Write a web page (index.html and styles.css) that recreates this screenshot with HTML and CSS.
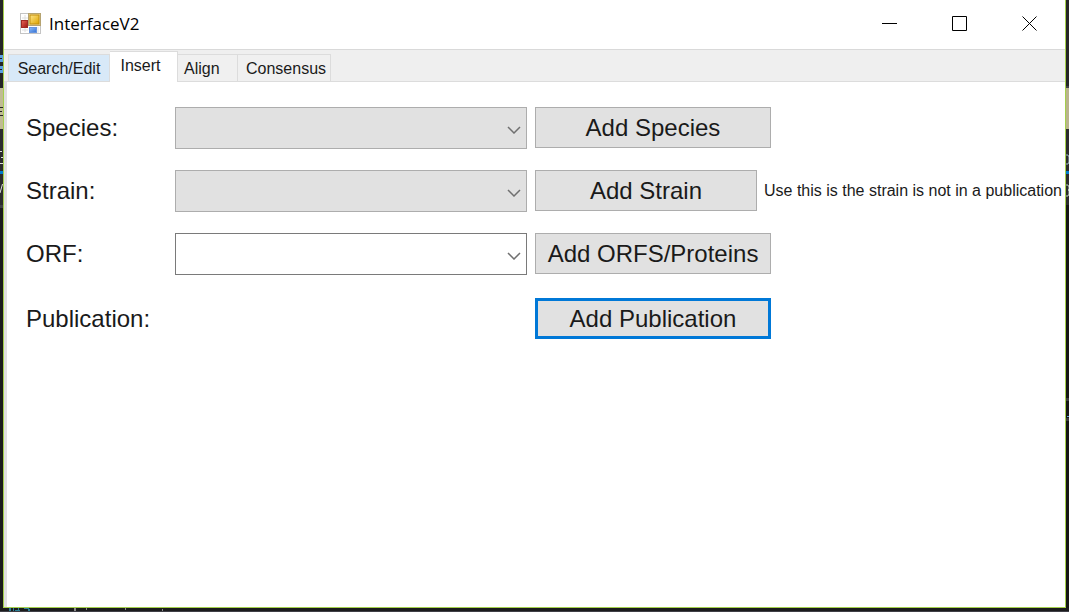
FILE: index.html
```html
<!DOCTYPE html>
<html lang="en">
<head>
<meta charset="utf-8">
<title>InterfaceV2</title>
<link rel="stylesheet" href="styles.css">
</head>
<body>
<div class="desktop">
  <svg class="edge" viewBox="0 0 3 608" preserveAspectRatio="xMinYMin slice" aria-hidden="true">
    <rect width="3" height="608" fill="#1b1b1c"/>
    <rect width="3" height="88" fill="#252526"/>
    <path d="M0 55h3v7H0zM0 66h3v7H0z" fill="#5a9fe0"/>
    <path d="M0 58h2v1H0zM0 69h2v1H0z" fill="#1e1e1e"/>
    <rect y="88" width="3" height="41" fill="#c0bb93"/>
    <path d="M0 107h3v1H0zM0 111h2v1H0zM0 115h3v1H0z" fill="#222"/>
    <rect y="129" width="3" height="76" fill="#2b2b2d"/>
    <path d="M0 151h2v1H0zM1 157h2v1H1zM0 163h3v1H0z" fill="#ddd"/>
    <rect y="171" width="3" height="3" fill="#007acc"/>
    <path d="M2.500 184L0 193" stroke="#ddd" fill="none"/>
    <rect y="205" width="3" height="3" fill="#3f3f46"/>
  </svg>

  <main class="window">
    <header class="titlebar">
      <svg class="app-icon" viewBox="0 0 22 22" aria-hidden="true">
        <defs>
          <linearGradient id="gold" x2="1" y2="1"><stop stop-color="#ffe68a"/><stop offset="1" stop-color="#dda400"/></linearGradient>
          <linearGradient id="red" x2="1" y2="1"><stop stop-color="#e8665b"/><stop offset="1" stop-color="#9c150e"/></linearGradient>
          <linearGradient id="blue" x2="1" y2="1"><stop stop-color="#8cbcff"/><stop offset="1" stop-color="#3470d0"/></linearGradient>
        </defs>
        <rect x="0.500" y="0.500" width="20" height="20" fill="#fff" stroke="#c4c4c4"/>
        <path d="M2 5h6M2 17h6M13 14v6M5 2v17M18 14v6" stroke="#dedede"/>
        <rect x="8.500" y="0.500" width="12" height="12" fill="#ead69b" stroke="#b5a370"/>
        <rect x="10" y="2" width="9" height="9" fill="url(#gold)" stroke="#c18e0c"/>
        <rect x="1.500" y="7.500" width="6" height="7" fill="url(#red)" stroke="#9e2b25"/>
        <rect x="9.500" y="14.500" width="7" height="5" fill="url(#blue)" stroke="#6795df"/>
      </svg>
      <h1 class="title">InterfaceV2</h1>
      <button class="caption" type="button" aria-label="Minimize"><svg viewBox="0 0 16 16"><path d="M0 7.500h15"/></svg></button>
      <button class="caption" type="button" aria-label="Maximize"><svg viewBox="0 0 16 16"><path d="M.5.5h14v14H.5z"/></svg></button>
      <button class="caption" type="button" aria-label="Close"><svg viewBox="0 0 16 16"><path d="M.5.5l14 14M14.500.5l-14 14"/></svg></button>
    </header>

    <div class="tabs" role="tablist">
      <button class="tab tab-hover" type="button" role="tab" aria-selected="false">Search/Edit</button>
      <button class="tab tab-active" type="button" role="tab" aria-selected="true">Insert</button>
      <button class="tab tab-align" type="button" role="tab" aria-selected="false">Align</button>
      <button class="tab" type="button" role="tab" aria-selected="false">Consensus</button>
    </div>

    <form class="form">
      <label class="label" for="species">Species:</label>
      <div class="combo">
        <select class="select" id="species"><option></option></select>
        <svg class="chevron" viewBox="0 0 14 8" aria-hidden="true"><path d="M1 1l6 6 6-6"/></svg>
      </div>
      <div class="action"><button class="button" type="button">Add Species</button></div>

      <label class="label" for="strain">Strain:</label>
      <div class="combo">
        <select class="select" id="strain"><option></option></select>
        <svg class="chevron" viewBox="0 0 14 8" aria-hidden="true"><path d="M1 1l6 6 6-6"/></svg>
      </div>
      <div class="action">
        <button class="button button-narrow" type="button">Add Strain</button>
        <span class="note">Use this is the strain is not in a publication</span>
      </div>

      <label class="label" for="orf">ORF:</label>
      <div class="combo">
        <select class="select select-open" id="orf"><option></option></select>
        <svg class="chevron" viewBox="0 0 14 8" aria-hidden="true"><path d="M1 1l6 6 6-6"/></svg>
      </div>
      <div class="action"><button class="button" type="button">Add ORFS/Proteins</button></div>

      <span class="label">Publication:</span>
      <div class="action action-last"><button class="button button-default" type="button">Add Publication</button></div>
    </form>
  </main>

  <svg class="edge" viewBox="0 0 3 608" preserveAspectRatio="xMinYMin slice" aria-hidden="true">
    <rect width="3" height="608" fill="#151515"/>
    <rect width="3" height="88" fill="#252526"/>
    <rect y="86" width="3" height="2" fill="#3f3f46"/>
    <rect y="88" width="3" height="41" fill="#b9b48c"/>
    <rect y="129" width="3" height="76" fill="#2b2b2d"/>
    <path d="M0 155h2l1 2v5l-1 2H0" stroke="#9db6c4" fill="none"/>
    <rect y="171" width="3" height="3" fill="#007acc"/>
    <path d="M0 185h2l1 2v2l-1 1 1 1v3l-1 2H0" stroke="#b6cbc0" fill="none"/>
    <path d="M0 398h3v3H0zM0 418h3v3H0z" fill="#3a3a3c"/>
    <path d="M1 416h2v1H1z" fill="#69a8d8"/>
  </svg>

  <svg class="footer-edge" viewBox="0 0 1069 4" preserveAspectRatio="xMinYMin slice" aria-hidden="true">
    <rect width="1069" height="4" fill="#1b1b1c"/>
    <path d="M0 3h1069v1H0z" fill="#3f3f46"/>
    <path d="M9 0h2v3H9zM13 0h1v3h-1zM15 2h5v1h-5zM18 0h1v2h-1zM24 0h5v1h-5zM28 1h2v2h-2z" fill="#2b7f95"/>
    <path d="M74 0h2v3h-2zM86 0h1v2h-1zM125 0h1v2h-1zM162 1h1v2h-1z" fill="#8a8a8a"/>
  </svg>
</div>
</body>
</html>
```
FILE: styles.css
```css
* {
  box-sizing: border-box;
}

body {
  margin: 0;
  background: #1b1b1c;
  color: #1a1a1a;
  font-family: "Liberation Sans", Arial, sans-serif;
}

button,
select {
  margin: 0;
  padding: 0;
  border-radius: 0;
  color: inherit;
  font-family: inherit;
}

.desktop {
  display: grid;
  grid-template-columns: 3px 1fr 3px;
  grid-template-rows: 1fr 4px;
  min-height: 100vh;
}

.edge {
  width: 3px;
  height: 100%;
}

.footer-edge {
  grid-column: 1 / -1;
  width: 100%;
  height: 4px;
}

.window {
  display: flex;
  flex-direction: column;
  background: #fff;
  border: 1px solid #a4cf4b;
  border-top: 0;
}

.titlebar {
  display: flex;
  align-items: center;
  height: 50px;
  padding: 0 0 2px 16px;
  border-bottom: 1px solid #d9d9d9;
}

.app-icon {
  width: 22px;
  height: 22px;
}

.title {
  flex: 1;
  margin: 0 0 0 7px;
  color: #000;
  font: 400 17px/24px "Open Sans", "Noto Sans", sans-serif;
}

.caption {
  display: flex;
  align-items: center;
  justify-content: center;
  width: 70px;
  height: 46px;
  border: 0;
  background: none;
}

.caption svg {
  width: 16px;
  height: 16px;
  fill: none;
  stroke: #000;
}

.tabs {
  display: flex;
  align-items: flex-end;
  height: 32px;
  padding-left: 4px;
  background: #efefef;
  box-shadow: inset 0 -1px #dcdcdc;
}

.tab {
  height: 28px;
  padding: 2px 4px 0 8px;
  border: 1px solid #dcdcdc;
  border-left: 0;
  background: #f0f0f0;
  font-size: 16px;
  line-height: 24px;
}

.tab-hover {
  width: 102px;
  border-left: 1px solid #dcdcdc;
  padding: 2px 8px 0 8px;
  background: #d8e9f8;
}

.tab-active {
  width: 68px;
  height: 31px;
  padding: 0 16px 2px 10px;
  border-bottom: 0;
  background: #fff;
}

.tab-align {
  width: 60px;
  padding: 2px 18px 0 6px;
}

.form {
  flex: 1;
  display: grid;
  grid-template-columns: 149px minmax(120px, 1fr) 528px;
  grid-template-rows: 42px 42px 44px 42px;
  align-content: start;
  row-gap: 21px;
  padding: 25px 2px 25px 19px;
  border-left: 3px solid #e0e0e0;
}

.label {
  font-size: 24px;
  line-height: 41px;
}

.combo {
  position: relative;
  height: 42px;
  margin-right: 8px;
}

.select {
  appearance: none;
  width: 100%;
  height: 100%;
  padding: 0 32px 0 8px;
  border: 1px solid #adadad;
  background: #e1e1e1;
  font-size: 24px;
}

.select-open {
  border-color: #7a7a7a;
  background: #fff;
}

.chevron {
  position: absolute;
  top: 19px;
  right: 6px;
  width: 14px;
  height: 8px;
  fill: none;
  stroke: #707070;
  stroke-width: 1.5;
  pointer-events: none;
}

.action {
  display: flex;
  align-items: center;
  gap: 7px;
  height: 41px;
}

.action-last {
  grid-column: 3;
}

.button {
  flex: none;
  width: 236px;
  height: 41px;
  border: 1px solid #adadad;
  background: #e1e1e1;
  font-size: 24px;
  line-height: 36px;
}

.button-narrow {
  width: 222px;
}

.button-default {
  border: 3px solid #0078d7;
}

.note {
  font-size: 16px;
  line-height: 24px;
  white-space: nowrap;
}
```
